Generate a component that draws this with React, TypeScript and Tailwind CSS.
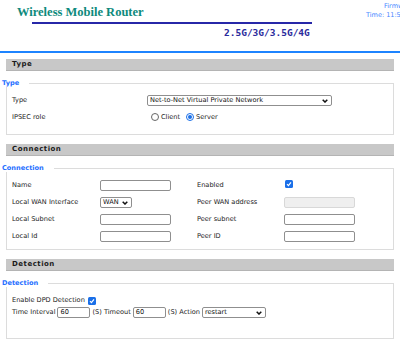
import React from 'react'

const font = { fontFamily: '"DejaVu Sans", Verdana, sans-serif' }

const SectionBar = ({ title }: { title: string }) => (
  <div className="h-[12px] bg-[#c8c8c8] border-b border-[#b4b4b4] pl-[6px] flex items-center text-[7px] font-bold tracking-[0.5px] text-[#1a1a1a]">
    {title}
  </div>
)

const Box = ({ legend, children, className }: { legend: string; children: React.ReactNode; className: string }) => (
  <fieldset className={`border border-[#dcdcdc] ml-0 ${className}`}>
    <legend className="ml-[-10px] pr-[10px] text-[6.6px] font-bold text-[#1f6fff] leading-[8px]">{legend}</legend>
    {children}
  </fieldset>
)

const TextBox = ({ value, disabled, w = 'w-[71px]' }: { value?: string; disabled?: boolean; w?: string }) => (
  <div
    className={`${w} h-[11px] rounded-[2px] border text-[6.6px] leading-[9px] pl-[2px] text-[#111] ${
      disabled ? 'border-[#d8d8d8] bg-[#efefef]' : 'border-[#8f8f8f] bg-white'
    }`}
  >
    {value}
  </div>
)

const Select = ({ value, w }: { value: string; w: string }) => (
  <div className={`${w} h-[11px] rounded-[2px] border border-[#8f8f8f] bg-white flex items-center justify-between pl-[2px] pr-[3px] text-[6.6px] text-[#111]`}>
    <span>{value}</span>
    <svg width="6" height="4" viewBox="0 0 6 4">
      <path d="M0.7 0.7 L3 3 L5.3 0.7" stroke="#111" strokeWidth="1.5" fill="none" />
    </svg>
  </div>
)

const Check = () => (
  <span className="inline-flex w-[8px] h-[8px] rounded-[1.5px] bg-[#1a6fe8] items-center justify-center">
    <svg width="6" height="6" viewBox="0 0 6 6">
      <path d="M1 3.2 L2.4 4.6 L5 1.3" stroke="#fff" strokeWidth="1.2" fill="none" />
    </svg>
  </span>
)

const Radio = ({ on }: { on?: boolean }) => (
  <span className={`inline-flex w-[8px] h-[8px] rounded-full border items-center justify-center ${on ? 'border-[#1a6fe8]' : 'border-[#666]'}`}>
    {on && <span className="w-[4px] h-[4px] rounded-full bg-[#1a6fe8]" />}
  </span>
)

export default function App() {
  return (
    <div className="w-[400px] h-[345px] overflow-hidden bg-white text-[#222]" style={font}>
      <div className="h-[51px] flex">
        <div className="w-[366px] shrink-0">
          <div className="pl-[17px] pt-[4px] text-[12.5px] leading-[16px] font-bold text-[#0d8a7c]" style={{ fontFamily: '"Liberation Serif", serif' }}>
            Wireless Mobile Router
          </div>
          <div className="ml-[32px] mt-[2px] w-[280px] h-[2px] bg-[#2727a8]" />
          <div className="ml-[224px] mt-[3px] text-[9.5px] leading-[11px] font-bold text-[#2a2a9c]" style={{ fontFamily: '"DejaVu Sans Mono", monospace' }}>
            2.5G/3G/3.5G/4G
          </div>
        </div>
        <div className="pt-[2px] text-[6.5px] leading-[9px] text-[#3f86ff] whitespace-nowrap">
          <div className="pl-[18px]">Firmware Version</div>
          <div>Time: 11:52:08</div>
        </div>
      </div>
      <div className="h-[2px] bg-[#1d84ff]" />

      <div className="px-[6px] pt-[6px]">
        <SectionBar title="Type" />
        <Box legend="Type" className="mt-[8px] h-[56px] pl-[5px]">
          <div className="grid grid-cols-[135px_auto] text-[6.6px] items-center pt-[5px]">
            <div className="h-[17px] flex items-center">Type</div>
            <Select value="Net-to-Net Virtual Private Network" w="w-[185px]" />
            <div className="h-[17px] flex items-center">IPSEC role</div>
            <div className="flex items-center pl-[4px] gap-[2px]">
              <Radio /> <span className="mr-[4px]">Client</span> <Radio on /> <span>Server</span>
            </div>
          </div>
        </Box>

        <div className="mt-[9px]">
          <SectionBar title="Connection" />
        </div>
        <Box legend="Connection" className="mt-[8px] h-[86px] pl-[5px]">
          <div className="grid grid-cols-[88px_97px_87px_auto] text-[6.6px] items-center pt-[5px]">
            <div className="h-[17px] flex items-center">Name</div>
            <TextBox />
            <div>Enabled</div>
            <div className="pl-[1px]"><Check /></div>

            <div className="h-[17px] flex items-center">Local WAN Interface</div>
            <Select value="WAN" w="w-[32px]" />
            <div>Peer WAN address</div>
            <TextBox disabled />

            <div className="h-[17px] flex items-center">Local Subnet</div>
            <TextBox />
            <div>Peer subnet</div>
            <TextBox />

            <div className="h-[17px] flex items-center">Local Id</div>
            <TextBox />
            <div>Peer ID</div>
            <TextBox />
          </div>
        </Box>

        <div className="mt-[9px]">
          <SectionBar title="Detection" />
        </div>
        <Box legend="Detection" className="mt-[8px] h-[60px] pl-[5px]">
          <div className="text-[6.6px] pt-[8px]">
            <div className="flex items-center gap-[3px] h-[11px]">
              Enable DPD Detection <Check />
            </div>
            <div className="flex items-center gap-[2px] h-[13px]">
              <span>Time Interval</span>
              <TextBox value="60" w="w-[33px]" />
              <span>(S) Timeout</span>
              <TextBox value="60" w="w-[33px]" />
              <span>(S) Action</span>
              <Select value="restart" w="w-[64px]" />
            </div>
          </div>
        </Box>
      </div>
    </div>
  )
}
